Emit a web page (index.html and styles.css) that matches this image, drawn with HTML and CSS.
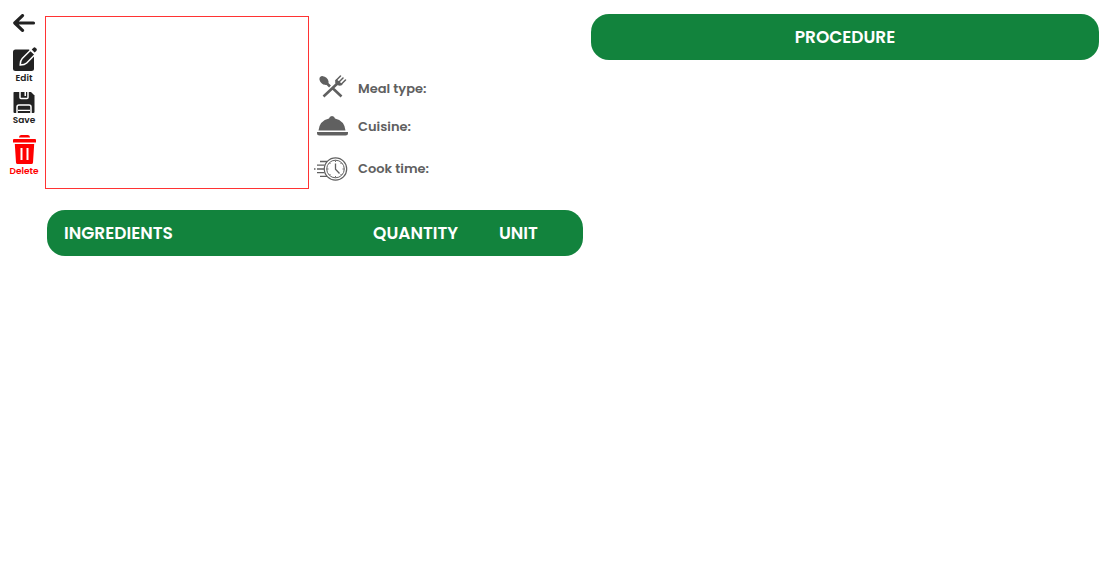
FILE: index.html
```html
<!DOCTYPE html>
<html lang="en">
<head>
<meta charset="utf-8">
<meta name="viewport" content="width=device-width, initial-scale=1">
<title>Recipe</title>
<link rel="stylesheet" href="styles.css">
</head>
<body>
<main class="page">
  <section class="recipe">
    <nav class="rail" aria-label="Recipe actions">
      <button class="action back" type="button" aria-label="Back">
        <svg width="24" height="18" viewBox="0 0 24 18" fill="none" stroke="currentColor" stroke-width="3.2" stroke-linejoin="round" stroke-linecap="round"><path d="M10.500 1.600 2.800 9l7.700 7.400M3 9h18.500"/></svg>
      </button>
      <button class="action edit" type="button">
        <svg width="26" height="25" viewBox="-2 0 26 25"><path fill="currentColor" d="M2.500 2.500H16L21 8v13.500q0 2.500-2.500 2.500h-16Q0 24 0 21.500V5q0-2.500 2.500-2.500z"/><path d="M17.500 3.200 9.200 11.500q-2 2-2 6.500 4.500 0 6.500-2L22 7.500z" fill="currentColor" stroke="#fff" stroke-width="1.500"/><path fill="currentColor" d="m18.700 2.600 1.600-1.700q1.200-1.100 2.400 0l.6.600q1.100 1.200 0 2.400l-1.700 1.600z"/></svg>
        <span>Edit</span>
      </button>
      <button class="action save" type="button">
        <svg width="22" height="22" viewBox="0 0 22 22"><path fill="currentColor" d="M1 0h17l3.500 3.500V20q0 1-1 1H1.500q-1 0-1-1V1q0-1 .5-1z"/><path fill="none" stroke="#fff" stroke-width="1.500" d="M7 0v5.500q0 1 1 1h6q1 0 1-1V0M4 21v-6q0-2 2-2h10q2 0 2 2v6"/><path fill="#fff" d="M11.500 0h1.500v4h-1.500zM5 17.800h12V19H5z"/></svg>
        <span>Save</span>
      </button>
      <button class="action delete" type="button">
        <svg width="26" height="30" viewBox="-2 0 26 30"><path fill="currentColor" fill-rule="evenodd" d="M8 0h7q2 0 2 2.500H6Q6 0 8 0zM1 4h21q1 0 1 1v2.500H0V5q0-1 1-1zM1.800 9h19.400L20 27.500q-.2 1.500-1.500 1.500h-14Q3.200 29 3 27.500zm5.700 4V25h2V13zm6 0V25h2V13z"/></svg>
        <span>Delete</span>
      </button>
    </nav>
    <div class="details">
      <div class="summary">
        <div class="photo"></div>
        <dl class="facts">
          <div class="fact meal">
            <dt><svg width="34" height="24" viewBox="0 0 34 24" fill="none" stroke="currentColor"><ellipse cx="10" cy="5.500" rx="3.600" ry="5.200" transform="rotate(-48 10 5.500)" fill="currentColor" stroke="none"/><path stroke-width="2.600" d="m11 6.500 5 5M19 13.500l8.500 8M9.500 21.500 25 7"/><path stroke-width="1.500" stroke-linecap="round" d="m22 5.500 4.500-4.500M24.500 7.500 29 3M27 9.500l4.500-4.500"/><path d="M22 4.500q-2 3 .500 5t5.500.500l.5-.8-6-5z" fill="currentColor" stroke="none"/></svg><span>Meal type:</span></dt><dd></dd>
          </div>
          <div class="fact">
            <dt><svg width="34" height="22" viewBox="0 0 34 22" fill="currentColor"><path d="M15 2.500Q15.500 0 18 0t3 2.500q9.500 2.200 10.500 12H4.500Q5.500 4.700 15 2.500zM3 16h31v1q0 2.500-2.500 2.500h-26Q3 19.500 3 17z"/></svg><span>Cuisine:</span></dt><dd></dd>
          </div>
          <div class="fact">
            <dt><svg width="34" height="24" viewBox="0 0 34 24" fill="none" stroke="currentColor"><circle cx="21.500" cy="12" r="11.200" stroke-width="1.200"/><circle cx="21.500" cy="12" r="8.800" stroke-width="1"/><path stroke-width="1.300" d="M21.500 6.500v5.700l4 4.300M6 4.500h7M3 8.200h7.500M0 12h1.500M3 12h7M3 15.700h7.500M6 19.300h7"/><path stroke-width=".9" d="M21.500 3.500V5M21.500 19v1.500M13 12h1.500M28.500 12H30M15.500 6l1 1M27.500 6l-1 1M15.500 18l1-1M27.500 18l-1-1"/></svg><span>Cook time:</span></dt><dd></dd>
          </div>
        </dl>
      </div>
      <table class="ingredients">
        <colgroup><col><col class="quantity"><col class="unit"></colgroup>
        <thead><tr><th scope="col">INGREDIENTS</th><th scope="col">QUANTITY</th><th scope="col">UNIT</th></tr></thead>
        <tbody></tbody>
      </table>
    </div>
  </section>
  <section class="procedure">
    <h2>PROCEDURE</h2>
  </section>
</main>
</body>
</html>
```
FILE: styles.css
```css
* { box-sizing: border-box; }

body {
  margin: 0;
  background: #fff;
  font-family: Poppins, Inter, sans-serif;
}

svg { display: block; flex: none; }

.page {
  display: grid;
  grid-template-columns: minmax(0, 583fr) minmax(0, 508fr);
  gap: 8px;
  padding: 14px 14px 14px 0;
}

.recipe { display: flex; }

.rail {
  flex: none;
  width: 45px;
  padding-left: 3px;
  display: flex;
  flex-direction: column;
  align-items: center;
}

.action {
  display: flex;
  flex-direction: column;
  align-items: center;
  gap: 1px;
  padding: 0;
  border: 0;
  background: none;
  color: #222;
  font-family: inherit;
  font-size: 9px;
  font-weight: 600;
  line-height: 10px;
  cursor: pointer;
}

.back { margin-bottom: 15px; }
.edit { margin-bottom: 9px; }
.save { margin-bottom: 10px; }
.delete { color: #f00; }

.details { flex: 1; min-width: 0; }

.summary {
  display: flex;
  gap: 5px;
  margin-top: 2px;
}

.photo {
  flex: 0 1 264px;
  height: 173px;
  border: 1px solid #f33;
}

.facts {
  margin: 0;
  padding-top: 59px;
  display: flex;
  flex-direction: column;
  gap: 17px;
  color: #606060;
}

.fact { display: flex; }

.fact dt {
  display: flex;
  align-items: center;
  gap: 10px;
  font-size: 13px;
  font-weight: 600;
  line-height: 20px;
}

.meal dt { align-items: flex-end; }

.fact:last-child { padding-top: 2px; }

.fact dd { margin: 0; }

.ingredients {
  width: calc(100% - 2px);
  margin: 21px 0 0 2px;
  table-layout: fixed;
  border-collapse: separate;
  border-spacing: 0;
}

.quantity { width: 126px; }
.unit { width: 84px; }

.ingredients th {
  height: 46px;
  padding: 0;
  background: #12833d;
  color: #fff;
  font-size: 17px;
  font-weight: 600;
  text-align: left;
}

.ingredients th:first-child {
  padding-left: 17px;
  border-radius: 18px 0 0 18px;
}

.ingredients th:last-child { border-radius: 0 18px 18px 0; }

.procedure h2 {
  margin: 0;
  border-radius: 18px;
  background: #12833d;
  color: #fff;
  font-size: 17px;
  font-weight: 600;
  line-height: 46px;
  text-align: center;
}
```
